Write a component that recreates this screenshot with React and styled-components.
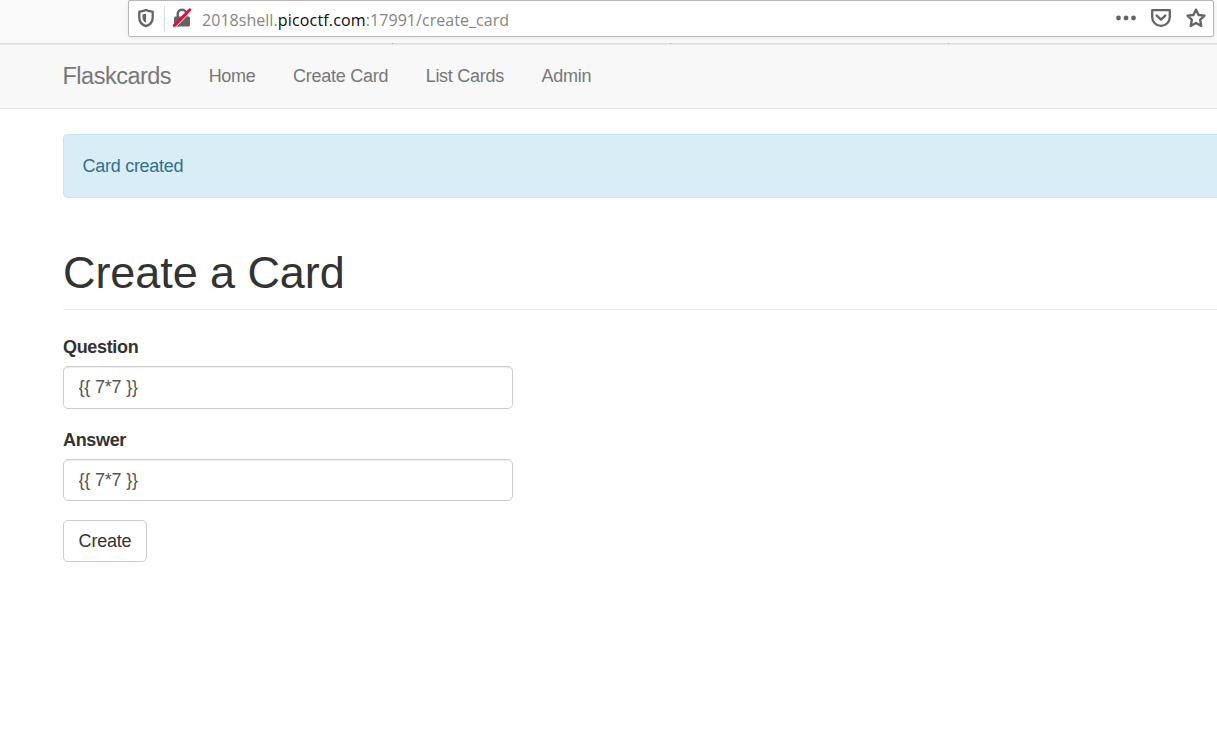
import React from "react";
import styled, { createGlobalStyle } from "styled-components";

const GlobalStyle = createGlobalStyle`
  * { box-sizing: border-box; }
  html, body { margin: 0; background: #fff; overflow: hidden; }
  body {
    font-family: "Liberation Sans", Arial, sans-serif;
    font-size: 17.5px;
    line-height: 25px;
    color: #333;
  }
`;

const Page = styled.div`
  width: 100%;
  height: 734px;
  overflow: hidden;
`;

const Toolbar = styled.div`
  height: 45px;
  padding: 0 3px 0 128px;
  background: #f9f9fa;
  border-bottom: 1px solid #e6e6e6;
  box-shadow: inset 0 -1px 0 #dededf;
  position: relative;
`;

const AddressBar = styled.div`
  height: 37px;
  display: flex;
  align-items: center;
  border: 1px solid #b8b8b8;
  border-radius: 2px;
  background: #fff;
  box-shadow: 0 1px 4px rgba(0, 0, 0, 0.07);
  padding: 0 7px 0 7px;
`;

const Icon = styled.svg`
  display: block;
  flex: none;
  width: 20px;
  height: 20px;
  margin-left: ${(p) => p.$gap || 0}px;
  margin-bottom: 1px;
`;

const Separator = styled.div`
  width: 1px;
  height: 26px;
  margin: 0 7px 0 8px;
  background: #dcdcdc;
`;

const Url = styled.div`
  flex: 1;
  margin: 2px 0 0 10px;
  font-family: "Open Sans", "Noto Sans", sans-serif;
  font-size: 16px;
  line-height: 22px;
  letter-spacing: 0.04px;
  color: #858585;
  white-space: nowrap;
`;

const Domain = styled.span`
  color: #0c0c0d;
  letter-spacing: 0.18px;
`;

const Tick = styled.i`
  position: absolute;
  top: 43px;
  left: ${(p) => p.$x}px;
  width: 1px;
  height: 1px;
  background: #a9a9a9;
`;

const Navbar = styled.nav`
  height: 64px;
  display: flex;
  align-items: center;
  gap: 37.5px;
  padding: 0 0 1px 62.5px;
  background: #f8f8f8;
  border-bottom: 1px solid #e7e7e7;
  color: #777;
`;

const Brand = styled.span`
  font-size: 23.5px;
  letter-spacing: -0.5px;
`;

const NavItem = styled.span`
  font-size: 18px;
  letter-spacing: -0.27px;
`;

const Content = styled.main`
  padding: 25px 0 0 63px;
`;

const Alert = styled.div`
  height: 64px;
  padding: 19px 18.5px;
  border: 1px solid #bce8f1;
  border-right: 0;
  border-radius: 5px 0 0 5px;
  background: #d9edf7;
  color: #31708f;
  font-size: 18px;
  letter-spacing: -0.27px;
`;

const Heading = styled.h1`
  height: 112px;
  margin: 0 0 25px;
  padding-top: 50px;
  border-bottom: 1px solid #eee;
  font-size: 45px;
  line-height: 50px;
  font-weight: 400;
  letter-spacing: -0.08px;
`;

const Field = styled.div`
  margin-bottom: 19px;
`;

const Label = styled.label`
  display: block;
  height: 25px;
  margin-bottom: 6px;
  font-size: 18px;
  font-weight: 700;
  letter-spacing: -0.34px;
`;

const Input = styled.input`
  display: block;
  width: 450px;
  height: ${(p) => p.$height}px;
  padding: 0 14.5px;
  border: 1px solid #ccc;
  border-radius: 5px;
  outline: 0;
  box-shadow: inset 0 1px 1px rgba(0, 0, 0, 0.075);
  background: #fff;
  color: #555;
  font: 18px "Liberation Sans", Arial, sans-serif;
  letter-spacing: -0.2px;
`;

const Button = styled.button`
  display: block;
  width: 84px;
  height: 42px;
  padding: 0;
  border: 1px solid #ccc;
  border-radius: 5px;
  background: #fff;
  color: #333;
  font: 18px "Liberation Sans", Arial, sans-serif;
  letter-spacing: -0.2px;
`;

const GREY = "#646464";

export default function App() {
  return (
    <Page>
      <GlobalStyle />
      <Toolbar>
        <AddressBar>
          <Icon viewBox="0 0 20 20">
            <path d="M10 2C12 3.1 14.3 3.6 16.7 3.7V9.5C16.7 13.6 14.2 16.7 10 18.2C5.8 16.7 3.3 13.6 3.3 9.5V3.7C5.7 3.6 8 3.1 10 2Z" fill="none" stroke={GREY} strokeWidth="2.3" strokeLinejoin="round" />
            <path d="M10 5.5V14.8C7.6 13.4 6.5 11.6 6.5 9.2V6.4C7.8 6.3 8.9 6 10 5.5Z" fill={GREY} />
          </Icon>
          <Separator />
          <Icon viewBox="0 0 20 20">
            <path d="M5.7 10V6a4.3 4.3 0 0 1 8.6 0V10" fill="none" stroke={GREY} strokeWidth="2.4" />
            <rect x="2" y="8.6" width="16" height="9.8" rx="1.5" fill={GREY} />
            <path d="M4.4 18.4L19 3.2" stroke="#fff" strokeWidth="1" />
            <path d="M2.2 17.4L17.8 1.8" stroke="#ff0039" strokeWidth="2.8" strokeLinecap="round" />
          </Icon>
          <Url>
            2018shell.<Domain>picoctf.com</Domain>:17991/create_card
          </Url>
          <Icon viewBox="0 0 20 20">
            <circle cx="2.5" cy="10" r="2.4" fill={GREY} />
            <circle cx="10" cy="10" r="2.4" fill={GREY} />
            <circle cx="17.5" cy="10" r="2.4" fill={GREY} />
          </Icon>
          <Icon viewBox="0 0 20 20" $gap={15}>
            <path d="M1.2 2.2H18.8V9C18.8 14 15 17.8 10 17.8S1.2 14 1.2 9Z" fill="none" stroke={GREY} strokeWidth="2.3" strokeLinejoin="round" />
            <path d="M5.7 7.6L10 11.7L14.3 7.6" fill="none" stroke={GREY} strokeWidth="2.4" strokeLinecap="round" strokeLinejoin="round" />
          </Icon>
          <Icon viewBox="0 0 20 20" $gap={15}>
            <path d="M10 1.6L12.5 7L18.5 7.7L14.1 11.8L15.3 17.9L10 14.9L4.7 17.9L5.9 11.8L1.5 7.7L7.5 7Z" fill="none" stroke={GREY} strokeWidth="2.3" strokeLinejoin="round" />
          </Icon>
        </AddressBar>
        <Tick $x={392} />
        <Tick $x={670} />
        <Tick $x={948} />
      </Toolbar>
      <Navbar>
        <Brand>Flaskcards</Brand>
        <NavItem>Home</NavItem>
        <NavItem>Create Card</NavItem>
        <NavItem>List Cards</NavItem>
        <NavItem>Admin</NavItem>
      </Navbar>
      <Content>
        <Alert>Card created</Alert>
        <Heading>Create a Card</Heading>
        <form onSubmit={(e) => e.preventDefault()}>
          <Field>
            <Label htmlFor="question">Question</Label>
            <Input id="question" $height={43} defaultValue="{{ 7*7 }}" />
          </Field>
          <Field>
            <Label htmlFor="answer">Answer</Label>
            <Input id="answer" $height={42} defaultValue="{{ 7*7 }}" />
          </Field>
          <Button type="submit">Create</Button>
        </form>
      </Content>
    </Page>
  );
}
